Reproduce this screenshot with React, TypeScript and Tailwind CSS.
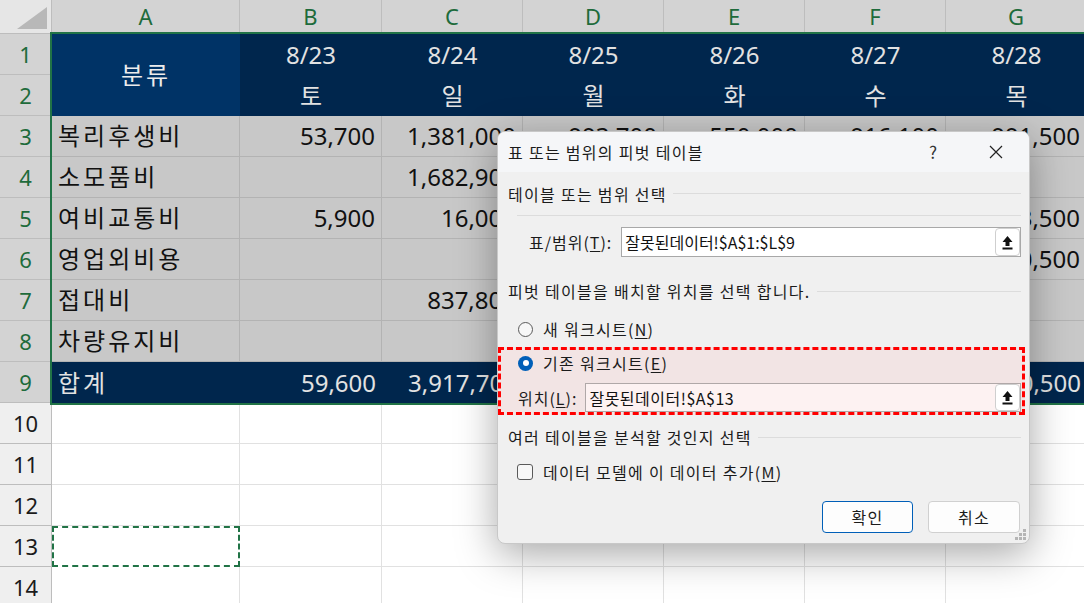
import React from "react";

const SHEET_FONT = { fontFamily: '"Noto Sans", "Noto Sans CJK KR", sans-serif' };
const DLG_FONT = { fontFamily: '"Noto Sans CJK KR", "Noto Sans", sans-serif' };

const cols = ["A", "B", "C", "D", "E", "F", "G"];
const dates = ["8/23", "8/24", "8/25", "8/26", "8/27", "8/28"];
const days = ["토", "일", "월", "화", "수", "목"];

const body: { name: string; v: string[] }[] = [
  { name: "복리후생비", v: ["53,700", "1,381,000", "993,700", "550,000", "916,100", "991,500"] },
  { name: "소모품비", v: ["", "1,682,900", "", "", "", ""] },
  { name: "여비교통비", v: ["5,900", "16,000", "", "", "", "13,500"] },
  { name: "영업외비용", v: ["", "", "", "", "", "10,500"] },
  { name: "접대비", v: ["", "837,800", "", "", "", ""] },
  { name: "차량유지비", v: ["", "", "", "", "", ""] },
];
const total = ["59,600", "3,917,700", "", "", "", "1,020,500"];

function UploadIcon() {
  return (
    <svg width="13" height="15" viewBox="0 0 13 15">
      <path d="M6.5 1 L1.5 7 H4.5 V11 H8.5 V7 H11.5 Z" fill="#111" />
      <rect x="1.5" y="12.5" width="10" height="2" fill="#111" />
    </svg>
  );
}

function U({ c }: { c: string }) {
  return <span className="underline underline-offset-2">{c}</span>;
}

function Heading({ text }: { text: string }) {
  return (
    <div className="flex items-center pl-[10px] pr-[8px] h-[28px]">
      <span className="text-[16px] tracking-[1.3px] text-[#1b1b1b] whitespace-nowrap">{text}</span>
      <div className="flex-1 h-px bg-[#dcdcdc] ml-[6px]" />
    </div>
  );
}

function Dialog() {
  return (
    <div
      className="absolute left-[497px] top-[131px] w-[533px] h-[413px] rounded-[8px] border border-[#c8c8c8] bg-[#f0f0f0] shadow-[0_10px_40px_rgba(0,0,0,0.35)] overflow-hidden flex flex-col"
      style={DLG_FONT}
    >
      {/* title */}
      <div className="h-[40px] bg-[#f5f6f8] flex items-center pl-[10px] text-[16px] text-[#1b1b1b] shrink-0">
        <span className="tracking-[1.3px]">표 또는 범위의 피벗 테이블</span>
        <span className="ml-auto mr-[52px] text-[17px] text-[#333]">?</span>
        <svg width="14" height="14" viewBox="0 0 14 14" className="mr-[26px]">
          <path d="M1 1 L13 13 M13 1 L1 13" stroke="#222" strokeWidth="1.2" />
        </svg>
      </div>

      <div className="h-[43px] flex items-center pl-[10px] pr-[8px]">
        <span className="text-[16px] tracking-[1.3px] text-[#1b1b1b] whitespace-nowrap">테이블 또는 범위 선택</span>
        <div className="flex-1 h-px bg-[#dcdcdc] ml-[6px]" />
      </div>
      <div className="h-px bg-[#dcdcdc] ml-[19px] mr-[8px]" />

      {/* range input */}
      <div className="mt-[11px] h-[30px] flex items-center pl-[31px] pr-[8px]">
        <span className="text-[16px] tracking-[1px] text-[#1b1b1b] whitespace-nowrap">
          표/범위(<U c="T" />):
        </span>
        <div className="ml-[9px] flex-1 h-[30px] bg-white border border-[#a8a8a8] flex items-center pl-[3px]">
          <span className="text-[16px] text-[#111]">잘못된데이터!$A$1:$L$9</span>
          <div className="ml-auto h-[28px] w-[25px] rounded-[4px] border border-[#cfcfcf] bg-white flex items-center justify-center">
            <UploadIcon />
          </div>
        </div>
      </div>

      <div className="mt-[20px]">
        <Heading text="피벗 테이블을 배치할 위치를 선택 합니다." />
      </div>

      {/* radio 1 */}
      <div className="mt-[12px] h-[24px] flex items-center pl-[20px]">
        <div className="w-[15px] h-[15px] rounded-full border border-[#5a5a5a] bg-[#f7f7f7]" />
        <span className="ml-[10px] text-[16px] tracking-[1.3px] text-[#1b1b1b]">
          새 워크시트(<U c="N" />)
        </span>
      </div>

      {/* highlighted box */}
      <div className="mt-[6px] h-[68px] mr-[4px] border-[3px] border-dashed border-[#ff0000] bg-[#f2e4e4] flex flex-col">
        <div className="mt-[1px] h-[24px] flex items-center pl-[17px]">
          <div className="w-[15px] h-[15px] rounded-full bg-[#005fb8] flex items-center justify-center">
            <div className="w-[6px] h-[6px] rounded-full bg-white" />
          </div>
          <span className="ml-[10px] text-[16px] tracking-[1.3px] text-[#1b1b1b]">
            기존 워크시트(<U c="E" />)
          </span>
        </div>
        <div className="mt-[8px] h-[29px] flex items-center pl-[17px] pr-[1px]">
          <span className="text-[16px] tracking-[1px] text-[#1b1b1b] whitespace-nowrap">
            위치(<U c="L" />):
          </span>
          <div className="ml-[8px] flex-1 h-[29px] bg-[#fdf2f2] border border-[#b0a8a8] flex items-center pl-[3px]">
            <span className="text-[16px] tracking-[0.5px] text-[#111]">잘못된데이터!$A$13</span>
            <div className="ml-auto h-[27px] w-[25px] rounded-[4px] border border-[#cfcfcf] bg-white flex items-center justify-center">
              <UploadIcon />
            </div>
          </div>
        </div>
      </div>

      <div className="mt-[8px]">
        <Heading text="여러 테이블을 분석할 것인지 선택" />
      </div>

      {/* checkbox */}
      <div className="mt-[9px] h-[24px] flex items-center pl-[19px]">
        <div className="w-[16px] h-[16px] rounded-[3px] border border-[#5a5a5a] bg-[#f7f7f7]" />
        <span className="ml-[10px] text-[16px] tracking-[1.3px] text-[#1b1b1b]">
          데이터 모델에 이 데이터 추가(<U c="M" />)
        </span>
      </div>

      {/* buttons */}
      <div className="mt-[17px] h-[32px] flex justify-end pr-[9px] gap-[15px]">
        <button className="w-[91px] h-[32px] rounded-[4px] border border-[#005fb8] bg-[#fdfdfd] text-[16px] tracking-[1.3px] text-[#1b1b1b]">
          확인
        </button>
        <button className="w-[92px] h-[32px] rounded-[4px] border border-[#d0d0d0] bg-[#fdfdfd] text-[16px] tracking-[1.3px] text-[#1b1b1b]">
          취소
        </button>
      </div>

      <svg width="12" height="12" viewBox="0 0 12 12" className="absolute right-[2px] bottom-[2px]">
        <rect x="8" y="0" width="3" height="3" fill="#b5b5b5" />
        <rect x="4" y="4" width="3" height="3" fill="#b5b5b5" />
        <rect x="8" y="4" width="3" height="3" fill="#b5b5b5" />
        <rect x="0" y="8" width="3" height="3" fill="#b5b5b5" />
        <rect x="4" y="8" width="3" height="3" fill="#b5b5b5" />
        <rect x="8" y="8" width="3" height="3" fill="#b5b5b5" />
      </svg>
    </div>
  );
}

export default function App() {
  const cells: React.ReactNode[] = [];

  cells.push(
    <div key="corner" className="relative bg-[#e6e6e6] border-r border-b border-[#bdbdbd]">
      <svg width="30" height="22" viewBox="0 0 30 22" className="absolute right-[4px] bottom-[4px]">
        <path d="M30 0 L30 22 L0 22 Z" fill="#b8b8b8" />
      </svg>
    </div>
  );
  cols.forEach((c) => {
    cells.push(
      <div
        key={"h" + c}
        className="bg-[#d3d3d3] border-r border-[#bdbdbd] border-b-2 border-b-[#217346] flex items-center justify-center text-[22px] text-[#1e6b3b]"
      >
        {c}
      </div>
    );
  });

  const rowHead = (n: number) => (
    <div
      key={"r" + n}
      className={
        "border-r border-b border-[#bdbdbd] flex items-center justify-center text-[22px] " +
        (n <= 9 ? "bg-[#d3d3d3] text-[#1e6b3b]" : "bg-[#efefef] text-[#1b1b1b]")
      }
    >
      {n}
    </div>
  );

  cells.push(rowHead(1));
  cells.push(
    <div
      key="a1"
      className="row-span-2 bg-[#003366] flex items-center justify-center text-[24px] tracking-[3px] text-[#ececec]"
    >
      분류
    </div>
  );
  dates.forEach((d, i) =>
    cells.push(
      <div key={"d" + i} className="bg-[#00264d] flex items-center justify-center text-[24px] text-[#e2e2e2]">
        {d}
      </div>
    )
  );
  cells.push(rowHead(2));
  days.forEach((d, i) =>
    cells.push(
      <div key={"w" + i} className="bg-[#00264d] flex items-center justify-center text-[24px] text-[#e2e2e2]">
        {d}
      </div>
    )
  );

  body.forEach((r, ri) => {
    const n = ri + 3;
    cells.push(rowHead(n));
    cells.push(
      <div
        key={"n" + n}
        className="bg-[#c8c8c8] border-r border-b border-[#b3b3b3] flex items-center pl-[6px] text-[24px] tracking-[3px] text-[#111] whitespace-nowrap"
      >
        {r.name}
      </div>
    );
    r.v.forEach((v, ci) =>
      cells.push(
        <div
          key={"v" + n + ci}
          className="bg-[#c8c8c8] border-r border-b border-[#b3b3b3] flex items-center justify-end pr-[6px] text-[24px] text-[#111] whitespace-nowrap"
        >
          {v}
        </div>
      )
    );
  });

  cells.push(rowHead(9));
  cells.push(
    <div key="t9" className="bg-[#00264d] flex items-center pl-[6px] text-[24px] tracking-[3px] text-[#e2e2e2]">
      합계
    </div>
  );
  total.forEach((v, ci) =>
    cells.push(
      <div
        key={"t" + ci}
        className="bg-[#00264d] flex items-center justify-end pr-[6px] text-[24px] text-[#e2e2e2] whitespace-nowrap"
      >
        {v}
      </div>
    )
  );

  for (let n = 10; n <= 14; n++) {
    cells.push(rowHead(n));
    for (let ci = 0; ci < 7; ci++) {
      if (n === 13 && ci === 0) {
        cells.push(
          <div key={"e" + n + ci} className="bg-white border-2 border-dashed border-[#217346]" />
        );
      } else {
        cells.push(<div key={"e" + n + ci} className="bg-white border-r border-b border-[#e1e1e1]" />);
      }
    }
  }

  return (
    <div className="relative w-[1084px] h-[603px] overflow-hidden bg-white" style={SHEET_FONT}>
      <div className="grid grid-cols-[52px_188px_142px_141px_141px_141px_141px_141px] grid-rows-[34px_repeat(14,41px)] w-[1087px]">
        {cells}
      </div>
      <div className="absolute left-[50px] top-[32px] w-[1100px] h-[373px] border-2 border-[#217346] pointer-events-none" />
      <Dialog />
    </div>
  );
}
